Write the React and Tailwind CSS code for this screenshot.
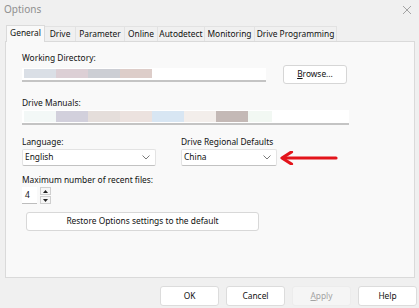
import React from 'react';

const tabs = [
  { label: 'General', w: 'w-[39px]' },
  { label: 'Drive', w: 'w-[31px]' },
  { label: 'Parameter', w: 'w-[49px]' },
  { label: 'Online', w: 'w-[33px]' },
  { label: 'Autodetect', w: 'w-[47px]' },
  { label: 'Monitoring', w: 'w-[50px]' },
  { label: 'Drive Programming', w: 'w-[82px]' },
];

const dirBlocks = ['bg-[#dadfe6]', 'bg-[#dccfd5]', 'bg-[#ccced4]', 'bg-[#ddcdc9]'];
const manualBlocks = [
  'bg-[#f3f8f7]',
  'bg-[#d2d0dc]',
  'bg-[#e5dedb]',
  'bg-[#ece2df]',
  'bg-[#d8e6f3]',
  'bg-[#f3eeeb]',
  'bg-[#c4b9b6]',
  'bg-[#f2f8f3]',
];

const Chevron = () => (
  <svg width="8" height="5" viewBox="0 0 8 5" className="text-[#6b6b6b]">
    <path d="M0.5 0.5 L4 4 L7.5 0.5" fill="none" stroke="currentColor" strokeWidth="0.9" />
  </svg>
);

const Select = ({ value, width }) => (
  <div className={`${width} h-[17px] bg-white border border-[#e3e3e3] border-b-[#c2c2c2] rounded-[2px] flex items-center justify-between pl-[2px] pr-[5px]`}>
    <span>{value}</span>
    <Chevron />
  </div>
);

const Button = ({ children, disabled }) => (
  <div
    className={`w-[59px] h-[20px] rounded-[3px] border flex items-center justify-center ${
      disabled ? 'bg-[#f5f5f5] border-[#ececec] text-[#a3a3a3]' : 'bg-white border-[#dcdcdc]'
    }`}
  >
    {children}
  </div>
);

export default function App() {
  return (
    <div
      className="w-[419px] h-[308px] bg-[#f0f0f0] flex flex-col text-[8.4px] text-[#111] overflow-hidden"
      style={{ fontFamily: '"Noto Sans", sans-serif' }}
    >
      {/* title bar */}
      <div className="h-[24px] flex items-start justify-between pl-[4px] pr-[7px] pt-[2px]">
        <span className="text-[10px] text-[#8f8f8f]">Options</span>
        <svg width="10" height="10" viewBox="0 0 10 10" className="mt-[3px] text-[#9a9a9a]">
          <path d="M1 1 L9 9 M9 1 L1 9" stroke="currentColor" strokeWidth="0.9" />
        </svg>
      </div>

      {/* tabs */}
      <div className="flex items-end h-[17px] pl-[6px]">
        {tabs.map((t, i) =>
          i === 0 ? (
            <div
              key={t.label}
              className={`${t.w} h-[17px] bg-[#f9f9f9] border border-b-0 border-[#dadada] flex items-center justify-center pb-[1px] -mb-px relative z-10`}
            >
              {t.label}
            </div>
          ) : (
            <div
              key={t.label}
              className={`${t.w} h-[15px] bg-[#f0f0f0] border-r border-t border-[#e2e2e2] flex items-center justify-center`}
            >
              {t.label}
            </div>
          )
        )}
      </div>

      {/* panel */}
      <div className="mx-[5px] mr-[4px] h-[237px] bg-[#f9f9f9] border border-[#dadada] pl-[16px] pt-[11px] flex flex-col">
        <div className="h-[10px] leading-[10px]">Working Directory:</div>
        <div className="flex items-center mt-[2px]">
          <div className="w-[244px] h-[14px] bg-white border-b-2 border-[#c4c4c4] flex items-center pl-[2px]">
            {dirBlocks.map((c, i) => (
              <div key={i} className={`w-[32px] h-[9px] ${c}`} />
            ))}
          </div>
          <div className="ml-[17px] w-[64px] h-[19px] bg-white border border-[#d6d6d6] rounded-[3px] flex items-center justify-center">
            <span>
              <span className="underline">B</span>rowse...
            </span>
          </div>
        </div>

        <div className="h-[10px] leading-[10px] mt-[14px]">Drive Manuals:</div>
        <div className="w-[327px] h-[15px] mt-[2px] bg-white border-b-2 border-[#c4c4c4] flex items-center pl-[2px]">
          {manualBlocks.map((c, i) => (
            <div key={i} className={`${i === 7 ? 'w-[24px]' : 'w-[32px]'} h-[11px] ${c}`} />
          ))}
        </div>

        <div className="flex mt-[12px]">
          <div className="flex flex-col">
            <div className="h-[10px] leading-[10px]">Language:</div>
            <div className="mt-[2px]">
              <Select value="English" width="w-[134px]" />
            </div>
          </div>
          <div className="flex flex-col ml-[25px]">
            <div className="h-[10px] leading-[10px]">Drive Regional Defaults</div>
            <div className="mt-[2px] flex items-center">
              <Select value="China" width="w-[96px]" />
              <svg width="60" height="14" viewBox="0 0 60 14" className="ml-[2px]">
                <path d="M5 7 L57 7" stroke="#e3141b" strokeWidth="3.2" strokeLinecap="round" />
                <path d="M12.5 1 L3 7 L12.5 13" fill="none" stroke="#e3141b" strokeWidth="3.2" strokeLinecap="round" strokeLinejoin="round" />
              </svg>
            </div>
          </div>
        </div>

        <div className="h-[10px] leading-[10px] mt-[9px]">Maximum number of recent files:</div>
        <div className="flex items-start mt-[2px]">
          <div className="w-[15px] h-[17px] bg-white border-b border-[#bdbdbd] flex items-center pl-[3px]">4</div>
          <div className="ml-[3px] w-[11px] h-[17px] flex flex-col gap-[1px]">
            <div className="h-[8px] bg-[#f6f6f6] border border-[#cfcfcf] flex items-center justify-center">
              <svg width="5" height="3" viewBox="0 0 5 3">
                <path d="M0 3 L2.5 0 L5 3 Z" fill="#222" />
              </svg>
            </div>
            <div className="h-[8px] bg-[#f6f6f6] border border-[#cfcfcf] flex items-center justify-center">
              <svg width="5" height="3" viewBox="0 0 5 3">
                <path d="M0 0 L2.5 3 L5 0 Z" fill="#222" />
              </svg>
            </div>
          </div>
        </div>

        <div className="ml-[4px] mt-[8px] w-[233px] h-[19px] bg-white border border-[#d8d8d8] rounded-[3px] flex items-center justify-center">
          Restore Options settings to the default
        </div>
      </div>

      {/* bottom buttons */}
      <div className="flex justify-end gap-[7px] pr-[2px] mt-[8px]">
        <Button>OK</Button>
        <Button>Cancel</Button>
        <Button disabled>
          <span>
            <span className="underline">A</span>pply
          </span>
        </Button>
        <Button>Help</Button>
      </div>
    </div>
  );
}
